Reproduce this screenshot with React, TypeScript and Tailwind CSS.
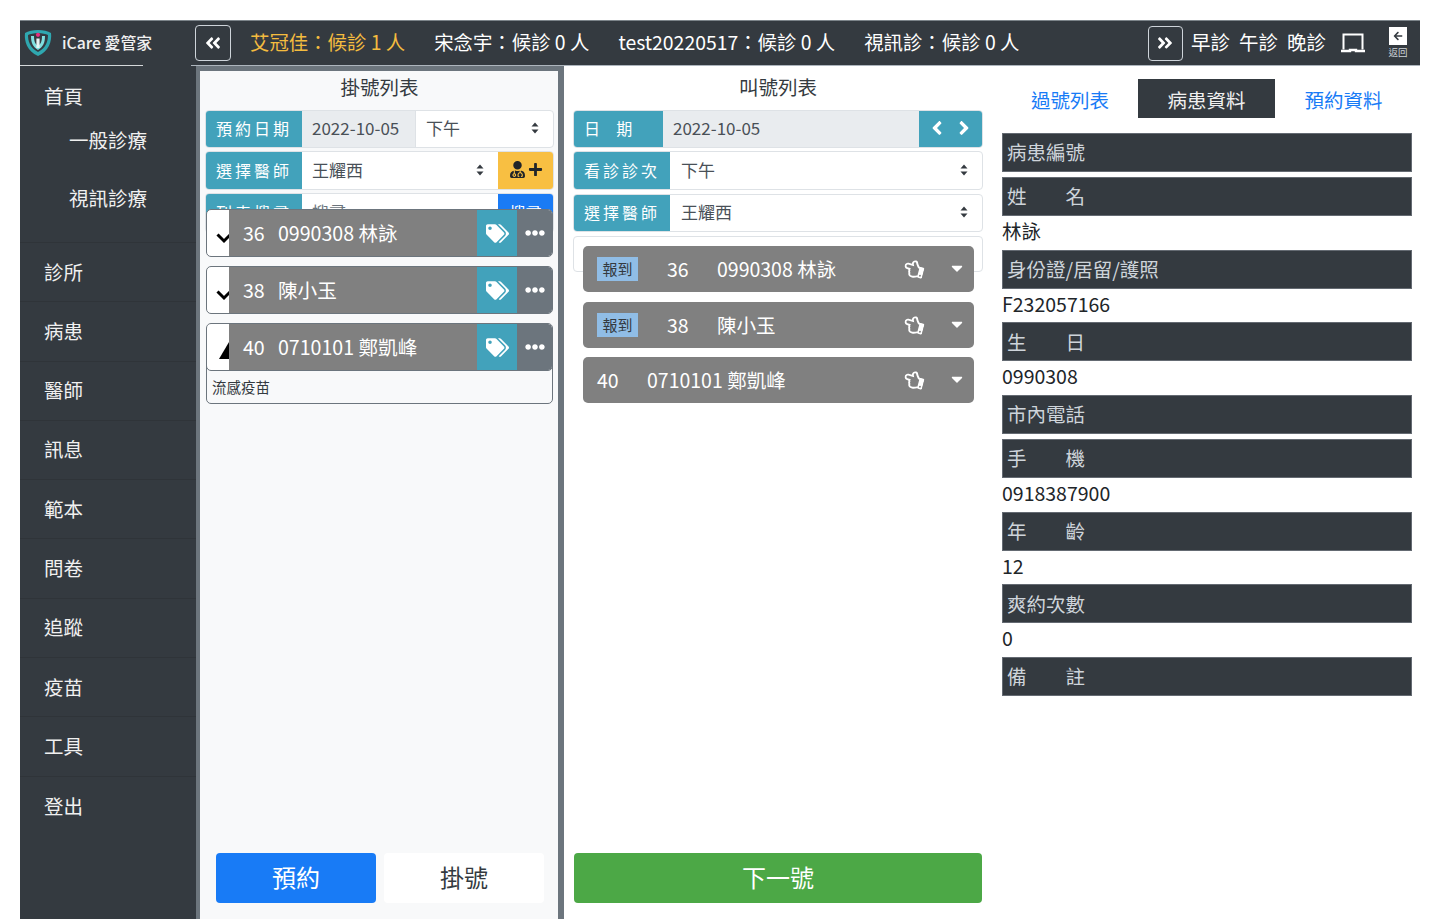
import React from "react";
import { FaAngleDoubleLeft, FaAngleDoubleRight, FaTags, FaEllipsisH, FaUserMd, FaPlus, FaArrowLeft, FaAngleLeft, FaAngleRight, FaRegHandPointLeft, FaCaretDown } from "react-icons/fa";

const font = { fontFamily: '"Noto Sans CJK TC", "Noto Sans", sans-serif' };

function Updown() {
  return (
    <svg width="8" height="12" viewBox="0 0 8 12" className="shrink-0">
      <path d="M4 0.5 L7.5 4.5 H0.5 Z M4 11.5 L0.5 7.5 H7.5 Z" fill="#343a40" />
    </svg>
  );
}

function Label({ w, children }: { w: string; children: React.ReactNode }) {
  return (
    <div className={`${w} h-full shrink-0 flex items-center pl-[10px] bg-[#42a2bb] text-white text-[16px] tracking-[3px] whitespace-pre`}>
      {children}
    </div>
  );
}

function Row({ mb = "mb-[3px]", h = "h-[38px]", children }: { mb?: string; h?: string; children: React.ReactNode }) {
  return (
    <div className={`${h} ${mb} flex items-center border border-[#dee2e6] rounded-[4px] overflow-hidden bg-white text-[#495057] text-[17px] [&>div]:pb-[2px]`}>
      {children}
    </div>
  );
}

function LeftCard({ num, text, up }: { num: string; text: string; up?: boolean }) {
  return (
    <div className="h-[48px] flex border border-[#6c757d] rounded-[5px] overflow-hidden bg-white shrink-0">
      <div className="w-[22px] shrink-0 flex justify-end items-center">
        {up ? (
          <svg width="10" height="18" viewBox="0 0 10 18" className="mt-[8px]"><path d="M10 0 L0 17 H10 Z" fill="#000" /></svg>
        ) : (
          <svg width="13" height="11" viewBox="0 0 13 11" className="mt-[10px]"><path d="M1.5 1.5 L8 8 L14 2" fill="none" stroke="#000" strokeWidth="3" /></svg>
        )}
      </div>
      <div className="flex-1 bg-[#808080] text-white text-[19.6px] flex items-center pl-[14px] pb-[1px] whitespace-pre">
        <span className="w-[35px]">{num}</span>
        <span>{text}</span>
      </div>
      <div className="w-[40px] shrink-0 bg-[#42a2bb] text-white flex items-center justify-center"><FaTags size={23} /></div>
      <div className="w-[35px] shrink-0 bg-[#6c757d] text-white flex items-center justify-center"><FaEllipsisH size={20} /></div>
    </div>
  );
}

function MidCard({ badge, num, text }: { badge?: boolean; num: string; text: string }) {
  return (
    <div className="h-[46px] mb-[10px] flex items-center bg-[#808080] rounded-[5px] text-white text-[19.5px] pl-[14px] pr-[8px] shrink-0 whitespace-pre">
      {badge && <span className="w-[41px] h-[24px] mr-[29px] bg-[#90bde6] text-[#343a40] text-[15px] flex items-center justify-center">報到</span>}
      <span className="w-[50px]">{num}</span>
      <span>{text}</span>
      <FaRegHandPointLeft size={20} className="ml-auto mr-[24px] rotate-[15deg]" />
      <FaCaretDown size={18} className="-mt-[3px]" />
    </div>
  );
}

function InfoBar({ label }: { label: string }) {
  return (
    <div className="h-[39px] mb-[5px] bg-[#343a40] text-[#ced4da] text-[19.5px] pl-[4px] pb-[1px] flex items-center border border-[#adb5bd]/40 whitespace-pre">
      {label}
    </div>
  );
}

function InfoValue({ value }: { value: string }) {
  return <div className="h-[23.67px] mb-[5px] text-[#212529] text-[19.5px] leading-[20px]">{value}</div>;
}

const navItems = ["診所", "病患", "醫師", "訊息", "範本", "問卷", "追蹤", "疫苗", "工具", "登出"];

export default function App() {
  return (
    <div className="h-[919px] overflow-hidden bg-white pl-5 pt-5" style={font}>
      <div className="w-[1400px] h-[899px] flex flex-col">
        <header className="h-[45px] shrink-0 bg-[#343a40] flex items-center text-white relative border-t border-[#adb5bd]/60">
          <div className="w-[176px] h-full shrink-0 flex items-center pl-[3px]">
            <svg width="30" height="30" viewBox="0 0 30 30" className="shrink-0">
              <path d="M15 2 C20 2 25 3 28 5 C29 13 26 23 15 28 C4 23 1 13 2 5 C5 3 10 2 15 2 Z" fill="#2fa8b0" />
              <path d="M15 5 C19 5 23 6 25 7 C25 13 23 20 15 24 C7 20 5 13 5 7 C7 6 11 5 15 5 Z" fill="#343a40" />
              <path d="M8 8 C8 15 10 19 15 22 C20 19 22 15 22 8 L19 8 C19 13 18 16 15 18 C12 16 11 13 11 8 Z" fill="#7fe0e0" />
              <rect x="13.4" y="10.5" width="3.2" height="9.5" fill="#e8f4f4" />
              <circle cx="15" cy="6.8" r="2.1" fill="#e6307f" />
            </svg>
            <span className="ml-[9px] text-[15.8px] font-medium text-[#f0f0f0] whitespace-nowrap">iCare 愛管家</span>
          </div>
          <button className="w-[36px] h-[36px] shrink-0 border border-[#ced4da] rounded-[4px] flex items-center justify-center -ml-[1px]"><FaAngleDoubleLeft size={18} /></button>
          <div className="flex text-[19.4px] gap-[29px] ml-[19px] pb-[2px] whitespace-pre">
            <span className="text-[#f4bc3f]">艾冠佳：候診 1 人</span>
            <span>宋念宇：候診 0 人</span>
            <span>test20220517：候診 0 人</span>
            <span>視訊診：候診 0 人</span>
          </div>
          <button className="w-[35px] h-[35px] shrink-0 ml-auto border border-[#ced4da] rounded-[4px] flex items-center justify-center"><FaAngleDoubleRight size={18} /></button>
          <div className="flex text-[19.5px] gap-[9px] ml-[8px] pb-[2px]">
            <span>早診</span><span>午診</span><span>晚診</span>
          </div>
          <svg width="26" height="22" viewBox="0 0 26 22" className="ml-[14px]" fill="none" stroke="#fff" strokeWidth="2">
            <path d="M3.5 17.5 V2.5 H22.5 V17.5" />
            <path d="M1 19 H10 V18 H16 V19 H25" strokeWidth="2.4" />
          </svg>
          <div className="w-[20px] ml-[22px] mr-[12px] flex flex-col items-center shrink-0">
            <div className="w-[18px] h-[18px] bg-white text-[#343a40] flex items-center justify-center"><FaArrowLeft size={10} /></div>
            <span className="text-[9.5px] leading-[14px] text-[#ced4da] whitespace-nowrap">返回</span>
          </div>
        </header>
        <div className="flex h-px shrink-0 bg-[#343a40]">
          <div className="w-[123px] bg-[#d5d8da]" />
          <div className="w-[48px]" />
          <div className="flex-1 bg-[#adb5bd]" />
        </div>
        <div className="flex-1 min-h-0 flex">
          <aside className="w-[176px] shrink-0 bg-[#343a40] text-[#f0f0f0] text-[19.5px]">
            <div className="h-[177px] border-b border-[#2f3439] pl-[24px] pt-[16px]">
              <div className="leading-[28px]">首頁</div>
              <div className="pl-[25px] leading-[28px] mt-[16px]">一般診療</div>
              <div className="pl-[25px] leading-[28px] mt-[30px]">視訊診療</div>
            </div>
            {navItems.map((n) => (
              <div key={n} className="h-[59.3px] flex items-center pl-[24px] pb-[2px] border-b border-[#2f3439] last:border-b-0">{n}</div>
            ))}
          </aside>
          <div className="flex-1 flex bg-[#6c757d] pl-[4px]">
            <section className="w-[358px] shrink-0 mt-[5px] bg-[#f8f9fa] flex flex-col pl-[5px] pr-[4px]">
              <h2 className="text-[19.5px] text-[#343a40] text-center h-[39px] leading-[32px] font-normal">掛號列表</h2>
              <Row>
                <Label w="w-[96px]">預約日期</Label>
                <div className="w-[114px] h-full flex items-center pl-[10px] bg-[#e9ecef] border-r border-[#dee2e6]">2022-10-05</div>
                <div className="flex-1 flex items-center justify-between pl-[10px] pr-[14px]">下午<Updown /></div>
              </Row>
              <Row h="h-[39px]">
                <Label w="w-[96px]">選擇醫師</Label>
                <div className="flex-1 flex items-center justify-between pl-[10px] pr-[14px]">王耀西<Updown /></div>
                <div className="w-[55px] h-full bg-[#f8bf42] flex items-center justify-center gap-[2px] text-[#212529]"><FaUserMd size={17} /><FaPlus size={15} /></div>
              </Row>
              <Row mb="mb-0" h="h-[40px]">
                <Label w="w-[96px]">列表搜尋</Label>
                <div className="flex-1 pl-[10px] text-[#6c757d]">搜尋</div>
                <div className="w-[55px] h-full bg-[#1a7bf5] text-white flex items-center justify-center text-[16px]">搜尋</div>
              </Row>
              <div className="relative z-10 -mt-[24px] mx-px flex flex-col gap-[9px]">
                <LeftCard num="36" text="0990308 林詠" />
                <LeftCard num="38" text="陳小玉" />
                <div className="border border-[#6c757d] rounded-[5px] overflow-hidden bg-[#f8f9fa]">
                  <div className="-m-px"><LeftCard num="40" text="0710101 鄭凱峰" up /></div>
                  <div className="h-[33px] pl-[5px] flex items-center text-[14.5px] text-[#343a40]">流感疫苗</div>
                </div>
              </div>
              <div className="mt-auto mb-[16px] flex gap-[8px] pl-[11px]">
                <button className="w-[160px] h-[50px] pb-[2px] rounded-[4px] bg-[#187bf6] text-white text-[24px]">預約</button>
                <button className="w-[160px] h-[50px] pb-[2px] rounded-[4px] bg-white text-[#343a40] text-[24px]">掛號</button>
              </div>
            </section>
            <div className="w-[6px] shrink-0" />
            <section className="w-[428px] shrink-0 pt-[5px] bg-white flex flex-col pl-[9px] pr-[9px]">
              <h2 className="text-[19.5px] text-[#343a40] text-center h-[39px] leading-[32px] font-normal">叫號列表</h2>
              <Row h="h-[38px]">
                <Label w="w-[89px]">{"日  期"}</Label>
                <div className="flex-1 h-full flex items-center pl-[10px] bg-[#e9ecef]">2022-10-05</div>
                <div className="w-[63px] h-full bg-[#42a2bb] text-white flex items-center justify-around px-[4px]"><FaAngleLeft size={22} /><FaAngleRight size={22} /></div>
              </Row>
              <Row h="h-[39px]" mb="mb-[4px]">
                <Label w="w-[96px]">看診診次</Label>
                <div className="flex-1 flex items-center justify-between pl-[11px] pr-[14px]">下午<Updown /></div>
              </Row>
              <Row h="h-[38px]" mb="mb-[4px]">
                <Label w="w-[96px]">選擇醫師</Label>
                <div className="flex-1 flex items-center justify-between pl-[11px] pr-[14px]">王耀西<Updown /></div>
              </Row>
              <Row h="h-[36px]" mb="mb-0"><span /></Row>
              <div className="relative z-10 -mt-[26px] ml-[10px] mr-[9px] flex flex-col">
                <MidCard badge num="36" text="0990308 林詠" />
                <MidCard badge num="38" text="陳小玉" />
                <div className="-mt-px"><MidCard num="40" text="0710101 鄭凱峰" /></div>
              </div>
              <button className="mt-auto mb-[16px] mx-px h-[50px] pb-[2px] rounded-[4px] bg-[#4ca846] text-white text-[24px] shrink-0">下一號</button>
            </section>
            <section className="flex-1 pt-[5px] bg-white flex flex-col pl-[10px] pr-[8px]">
              <div className="flex h-[39px] mt-[8px] mb-[15px] text-[19.5px]">
                <div className="w-[136px] flex items-center justify-center pt-[3px] text-[#187bf6]">過號列表</div>
                <div className="w-[137px] flex items-center justify-center pt-[3px] bg-[#343a40] text-[#f0f0f0]">病患資料</div>
                <div className="w-[137px] flex items-center justify-center pt-[3px] text-[#187bf6]">預約資料</div>
              </div>
              <InfoBar label="病患編號" />
              <InfoBar label="姓　　名" />
              <InfoValue value="林詠" />
              <InfoBar label="身份證/居留/護照" />
              <InfoValue value="F232057166" />
              <InfoBar label="生　　日" />
              <InfoValue value="0990308" />
              <InfoBar label="市內電話" />
              <InfoBar label="手　　機" />
              <InfoValue value="0918387900" />
              <InfoBar label="年　　齡" />
              <InfoValue value="12" />
              <InfoBar label="爽約次數" />
              <InfoValue value="0" />
              <InfoBar label="備　　註" />
            </section>
          </div>
        </div>
      </div>
    </div>
  );
}
